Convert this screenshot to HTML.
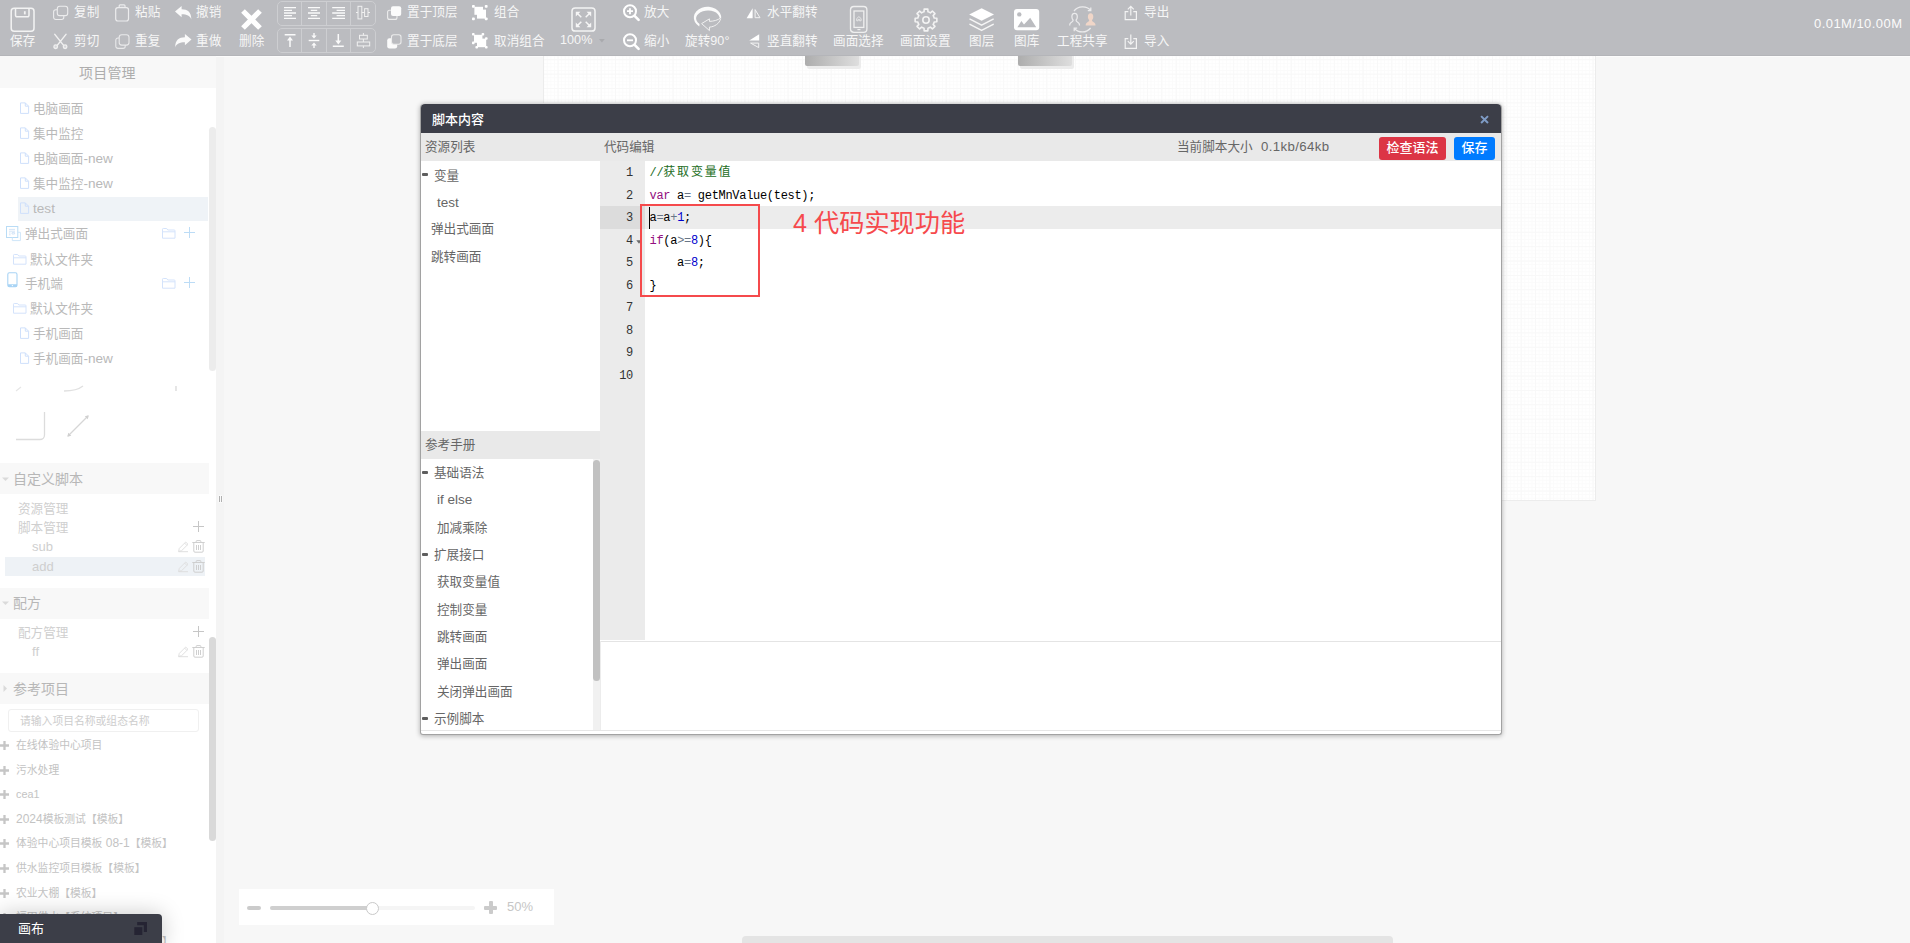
<!DOCTYPE html>
<html lang="zh-CN">
<head>
<meta charset="utf-8">
<title>脚本内容</title>
<style>
*{box-sizing:border-box;margin:0;padding:0}
html,body{width:1910px;height:943px;overflow:hidden;background:#f7f7f7;font-family:"Liberation Sans","Noto Sans CJK SC",sans-serif;font-size:13px;color:#333}
.abs{position:absolute}
#toolbar{position:absolute;left:0;top:0;width:1910px;height:56px;background:#bbbcc0;color:#f5f5f5;border-bottom:1px solid #b4b5b9}
#toolbar .t{position:absolute;font-size:12.6px;letter-spacing:0.05px;line-height:16px;white-space:nowrap;color:#f6f6f6}
#toolbar svg{position:absolute;overflow:visible}
.grp{position:absolute;left:277px;width:99px;height:25px;border:1px solid #cdced1;border-radius:5px}
.grp i{position:absolute;top:0;width:1px;height:23px;background:#cdced1}
#sidebar{position:absolute;left:0;top:56px;width:216px;height:887px;background:#fff;overflow:hidden}
#sidebar .hd{position:absolute;left:0;width:209px;background:#f8f8f8;color:#b4b4b4;font-size:14px}
#sidebar .it{position:absolute;font-size:12.6px;line-height:16px;color:#b9b9b9;white-space:nowrap}
#sidebar .sm{position:absolute;font-size:10.8px;line-height:14px;color:#c3c3c3;white-space:nowrap}
#sidebar svg{position:absolute;overflow:visible}
#canvas{position:absolute;left:543px;top:56px;width:1053px;height:445px;background-color:#fff;border-left:1px solid #ececec;border-right:1px solid #ececec;border-bottom:1px solid #ececec;
background-image:linear-gradient(#f8f8f8 1px,transparent 1px),linear-gradient(90deg,#f8f8f8 1px,transparent 1px),linear-gradient(#fbfbfb 1px,transparent 1px),linear-gradient(90deg,#fbfbfb 1px,transparent 1px);background-size:14.38px 14.38px,14.38px 14.38px,3.595px 3.595px,3.595px 3.595px;background-position:13.6px 3.3px}
#modal{position:absolute;left:420px;top:103px;width:1082px;height:632px;background:#fff;border:1px solid #a2a2a2;border-top-color:#d9d9d9;border-radius:5px 5px 3px 3px;box-shadow:0 1px 5px rgba(0,0,0,.3);overflow:hidden}
#modal .mh{position:absolute;left:0;top:0;width:1080px;height:28.5px;background:#3c3e48}
#modal .sh{position:absolute;left:0;top:28.5px;width:1080px;height:28.5px;background:#e9e9e9}
#modal .lt{position:absolute;font-size:12.6px;line-height:16px;color:#666;white-space:nowrap}
.code{position:absolute;font-family:"Liberation Mono","Noto Sans CJK SC",monospace;font-size:12px;letter-spacing:-0.3px;line-height:16px;white-space:pre;color:#000}
.code .k{color:#930f80}.code .o{color:#687687}.code .n{color:#0000cd}
.ln{position:absolute;font-family:"Liberation Mono",monospace;font-size:12px;letter-spacing:-0.3px;line-height:16px;color:#333;text-align:right;width:30px}
</style>
</head>
<body>
<!-- TOOLBAR -->
<div id="toolbar">
<!-- save -->
<svg style="left:10px;top:7px" width="25" height="25" viewBox="0 0 25 25" fill="none" stroke="#f3f3f3" stroke-width="1.5"><rect x="1.2" y="1.2" width="22.8" height="23" rx="3"/><path d="M5.5 1.5v6.8a1.5 1.5 0 0 0 1.5 1.5h10.500a1.500 1.500 0 0 0 1.500-1.500V1.500"/><path d="M14.8 4.200v3.200" stroke-width="1.800"/></svg>
<div class="t" style="left:10px;top:32.5px">保存</div>
<!-- copy -->
<svg style="left:53px;top:5px" width="16" height="16" viewBox="0 0 16 16" fill="none" stroke="#ececed" stroke-width="1.100"><rect x="4.300" y="1.300" width="10.400" height="9.300" rx="2.400"/><path d="M4.300 4.700H2.800a2.200 2.200 0 0 0-2.200 2.200v5.400A2.200 2.200 0 0 0 2.800 14.500h5.800a2.200 2.200 0 0 0 2.200-2.200V10.600"/></svg>
<div class="t" style="left:74px;top:4px">复制</div>
<!-- cut -->
<svg style="left:52px;top:33px" width="17" height="17" viewBox="0 0 17 17" fill="none" stroke="#f0f0f0" stroke-width="1.500" stroke-linecap="round"><path d="M2.800 1.400L11.600 12.400M14 1.400L5.200 12.400"/><circle cx="3.700" cy="13.700" r="1.800" stroke-width="1.300" fill="#d4d5d8"/><circle cx="13.100" cy="13.700" r="1.800" stroke-width="1.300" fill="#d4d5d8"/></svg>
<div class="t" style="left:74px;top:33px">剪切</div>
<!-- paste -->
<svg style="left:115px;top:4px" width="15" height="18" viewBox="0 0 15 18" fill="none" stroke="#ececed" stroke-width="1.2"><rect x="0.700" y="3.600" width="12.800" height="13.400" rx="2.200"/><path d="M4.200 3.600V1.800a1 1 0 0 1 1-1h3.800a1 1 0 0 1 1 1v1.800M5.400 3.400h3.400"/></svg>
<div class="t" style="left:135px;top:4px">粘贴</div>
<!-- repeat -->
<svg style="left:115px;top:34px" width="15" height="16" viewBox="0 0 15 16" fill="none" stroke="#e9e9ea" stroke-width="1.1"><rect x="4.200" y="0.700" width="9.800" height="10.400" rx="2.600"/><path d="M4.200 4H3a2.200 2.200 0 0 0-2.200 2.200v6A2.200 2.200 0 0 0 3 14.400h5a2.200 2.200 0 0 0 2.200-2.200V11.100"/></svg>
<div class="t" style="left:135px;top:33px">重复</div>
<!-- undo -->
<svg style="left:175px;top:6px" width="17" height="14" viewBox="0 0 17 14" fill="#fafafa"><path d="M0 5.400L6.600 0V3.300C12.500 3.300 16.400 6 16.300 13.400C15 9.800 12 8.300 6.600 8.300V11.200Z"/></svg>
<div class="t" style="left:196px;top:4px">撤销</div>
<!-- redo -->
<svg style="left:175px;top:34px" width="17" height="14" viewBox="0 0 17 14" fill="#fafafa"><path d="M16.500 5.400L9.900 0V3.300C4 3.300 0.100 6 0.200 13.400C1.500 9.800 4.500 8.300 9.900 8.300V11.200Z"/></svg>
<div class="t" style="left:196px;top:33px">重做</div>
<!-- delete -->
<svg style="left:241px;top:9px" width="21" height="21" viewBox="0 0 21 21" fill="none" stroke="#fff" stroke-width="5.200"><path d="M2 2L19 19M19 2L2 19"/></svg>
<div class="t" style="left:239px;top:32.5px">删除</div>
<!-- align groups -->
<div class="grp" style="top:1px"><i style="left:23px"></i><i style="left:48px"></i><i style="left:72px"></i></div>
<div class="grp" style="top:28px"><i style="left:23px"></i><i style="left:48px"></i><i style="left:72px"></i></div>
<svg style="left:277px;top:0" width="100" height="56" viewBox="277 0 100 56" fill="none" stroke="#fafafa" stroke-width="1.300">
<path d="M284 7.700h12M284 10.350h8M284 13h12M284 15.650h8M284 18.300h12"/>
<path d="M308 7.700h12M310.800 10.350h6.400M308 13h12M310.800 15.650h6.400M308 18.300h12"/>
<path d="M332.200 7.700h12.800M336.600 10.350h8.400M332.200 13h12.800M336.600 15.650h8.400M332.200 18.300h12.800"/>
<g stroke="#f0f0f0" stroke-width="1"><path d="M356 12.500h14"/><rect x="358" y="6.300" width="3.800" height="12.600" fill="#bbbcc0"/><rect x="364.600" y="8.700" width="3.400" height="7.800" fill="#bbbcc0"/></g>
<path d="M284.700 34.800h10.800M290 47V38" stroke-width="1.500"/><path d="M290 36.600l3 3.800h-6z" fill="#fafafa" stroke="none"/>
<path d="M308.700 40.500h10.600" stroke-width="1.400"/><path d="M314 33v3M314 48v-3" stroke-width="1.400"/><path d="M314 38.600l2.700-3.200h-5.400zM314 42.400l2.700 3.200h-5.400z" fill="#fafafa" stroke="none"/>
<path d="M332.800 46.200h11M338.300 34v8" stroke-width="1.500"/><path d="M338.300 44.400l3-3.800h-6z" fill="#fafafa" stroke="none"/>
<g stroke="#f0f0f0" stroke-width="1"><path d="M363.400 33v15"/><rect x="359.500" y="35.300" width="7.800" height="3.700" fill="#bbbcc0"/><rect x="357.300" y="42" width="12.400" height="3.900" fill="#bbbcc0"/></g>
</svg>
<!-- bring to top -->
<svg style="left:387px;top:6px" width="15" height="14" viewBox="0 0 15 14"><rect x="0.600" y="4.200" width="9.400" height="9.200" rx="2" fill="none" stroke="#ececec" stroke-width="1.100"/><rect x="4" y="0.200" width="10.200" height="9.800" rx="2" fill="#fbfbfb"/></svg>
<div class="t" style="left:407px;top:4px">置于顶层</div>
<svg style="left:387px;top:34px" width="15" height="15" viewBox="0 0 15 15"><rect x="0.200" y="4.300" width="10" height="10.200" rx="2.200" fill="#fbfbfb"/><rect x="4.500" y="0.700" width="9.500" height="9.600" rx="2.200" fill="#bbbcc0" stroke="#ececec" stroke-width="1.100"/></svg>
<div class="t" style="left:407px;top:33px">置于底层</div>
<!-- group -->
<svg style="left:472px;top:5px" width="16" height="16" viewBox="0 0 16 16" fill="#fff"><rect x="0" y="0" width="2.800" height="2.800" rx="0.800"/><rect x="12.800" y="0" width="2.800" height="2.800" rx="0.800"/><rect x="0" y="12.400" width="2.800" height="2.800" rx="0.800"/><rect x="12.800" y="12.400" width="2.800" height="2.800" rx="0.800"/><rect x="2.400" y="1.800" width="8.600" height="8"/><rect x="5" y="4.600" width="9" height="9"/></svg>
<div class="t" style="left:494px;top:4px">组合</div>
<svg style="left:472px;top:33px" width="16" height="16" viewBox="0 0 16 16" fill="#fff"><rect x="0" y="0" width="2.600" height="2.600" rx="0.800"/><rect x="9.600" y="0" width="2.600" height="2.600" rx="0.800"/><rect x="0" y="8.600" width="2.600" height="2.600" rx="0.800"/><rect x="13" y="4.200" width="2.600" height="2.600" rx="0.800"/><rect x="3.400" y="13" width="2.600" height="2.600" rx="0.800"/><rect x="13" y="13" width="2.600" height="2.600" rx="0.800"/><rect x="2" y="1.800" width="8.400" height="8"/><rect x="5" y="5.600" width="9.200" height="8.600"/></svg>
<div class="t" style="left:494px;top:33px">取消组合</div>
<!-- fit -->
<svg style="left:571px;top:7px" width="25" height="25" viewBox="0 0 25 25" fill="none" stroke="#f3f3f3" stroke-width="1.500"><rect x="1" y="0.900" width="23" height="23.200" rx="3.200"/><g stroke-width="1.500" stroke="#f6f6f6"><path d="M6.500 6.500l3.800 3.800M18.500 6.500l-3.800 3.800M6.500 18.500l3.800-3.800M18.500 18.500l-3.800-3.800"/></g><g fill="#f6f6f6" stroke="none"><path d="M4.800 4.800h4.600l-4.600 4.600zM20.200 4.800v4.600l-4.600-4.600zM4.800 20.200v-4.600l4.600 4.600zM20.200 20.200h-4.600l4.600-4.600z"/></g></svg>
<div class="t" style="left:560px;top:32px">100%</div>
<svg style="left:599px;top:39px" width="6" height="4" viewBox="0 0 6 4"><path d="M0 0h5.800L2.900 3.400z" fill="#a9aaad"/></svg>
<!-- zoom in/out -->
<svg style="left:622px;top:3.300px" width="18" height="18" viewBox="0 0 18 18" fill="none" stroke="#fff"><circle cx="8" cy="8.200" r="6" stroke-width="2"/><path d="M12.600 12.800l4 4" stroke-width="2.600" stroke-linecap="round"/><path d="M5 8.200h6M8 5.200v6" stroke-width="1.800"/></svg>
<div class="t" style="left:644px;top:4px">放大</div>
<svg style="left:622px;top:32px" width="18" height="18" viewBox="0 0 18 18" fill="none" stroke="#fff"><circle cx="8" cy="8.300" r="6" stroke-width="2"/><path d="M12.600 12.900l4 4" stroke-width="2.600" stroke-linecap="round"/><path d="M5 8.300h6" stroke-width="1.800"/></svg>
<div class="t" style="left:644px;top:33px">缩小</div>
<!-- rotate -->
<svg style="left:693px;top:6px" width="29" height="26" viewBox="0 0 29 26" fill="none"><path d="M6.250 20.500A13.700 11 0 1 1 28.150 12.660L26.650 11.700A11.800 7.800 0 1 0 6.560 17.900Z" fill="#fbfbfb"/><path d="M27.600 12.800C26.400 17.600 21.500 20.800 16.450 21.100V24.600L8.600 17.600L16.450 12.850V15.400C21 15.200 25 14 27.200 12.200" stroke="#f1f1f1" stroke-width="1" stroke-linejoin="round"/></svg>
<div class="t" style="left:685px;top:32.5px">旋转90°</div>
<!-- flips -->
<svg style="left:746px;top:8px" width="16" height="11" viewBox="0 0 16 11"><path d="M0.600 10.200L6.600 0.200V10.200Z" fill="#fff"/><path d="M9.100 1.600V9.700H14Z" fill="none" stroke="#f3f3f3" stroke-width="1"/></svg>
<div class="t" style="left:767px;top:4px">水平翻转</div>
<svg style="left:748px;top:34px" width="12" height="15" viewBox="0 0 12 15"><path d="M11.200 0.200V6.600H1.200Z" fill="#fff"/><path d="M10.700 9.100V13.600L2.600 9.100Z" fill="none" stroke="#f3f3f3" stroke-width="1"/></svg>
<div class="t" style="left:767px;top:33px">竖直翻转</div>
<!-- screen select -->
<svg style="left:850px;top:6px" width="18" height="27" viewBox="0 0 18 27" fill="none" stroke="#efefef" stroke-width="1.300"><rect x="0.500" y="0.500" width="16.400" height="25.800" rx="3.400"/><rect x="4" y="5" width="9.800" height="16.400"/><path d="M6.700 12.600l2.200-2 2.200 2v2.200h-1.500v-1.400h-1.400v1.400h-1.500z" stroke-width="0.800"/><path d="M7.400 23.600h3" stroke-width="1.200"/></svg>
<div class="t" style="left:833px;top:32.5px">画面选择</div>
<!-- settings gear -->
<svg style="left:914px;top:8px" width="24" height="24" viewBox="-12 -12 24 24" fill="none" stroke="#f3f3f3" stroke-width="1.600"><circle r="3.200"/><path d="M-1.96 -8.17L-1.82 -10.85L1.82 -10.85L1.96 -8.17A8.4 8.4 0 0 1 4.39 -7.16L6.39 -8.96L8.96 -6.39L7.16 -4.39A8.4 8.4 0 0 1 8.17 -1.96L10.85 -1.82L10.85 1.82L8.17 1.96A8.4 8.4 0 0 1 7.16 4.39L8.96 6.39L6.39 8.96L4.39 7.16A8.4 8.4 0 0 1 1.96 8.17L1.82 10.85L-1.82 10.85L-1.96 8.17A8.4 8.4 0 0 1 -4.39 7.16L-6.39 8.96L-8.96 6.39L-7.16 4.39A8.4 8.4 0 0 1 -8.17 1.96L-10.85 1.82L-10.85 -1.82L-8.17 -1.96A8.4 8.4 0 0 1 -7.16 -4.39L-8.96 -6.39L-6.39 -8.96L-4.39 -7.16A8.4 8.4 0 0 1 -1.96 -8.17Z" stroke-linejoin="round"/></svg>
<div class="t" style="left:900px;top:32.5px">画面设置</div>
<!-- layers -->
<svg style="left:969px;top:8px" width="26" height="24" viewBox="0 0 26 24" fill="none"><path d="M12.600 0.200L25 6.400L12.600 12.800L0.200 6.400Z" fill="#fff"/><path d="M1 11.200L12.600 17.200L24.200 11.200M1 16.400L12.600 22.400L24.200 16.400" stroke="#f6f6f6" stroke-width="1.500" stroke-linejoin="round" stroke-linecap="round"/></svg>
<div class="t" style="left:969px;top:32.5px">图层</div>
<!-- gallery -->
<svg style="left:1014px;top:9px" width="26" height="22" viewBox="0 0 26 22"><rect x="0" y="0" width="25.200" height="21.200" rx="3" fill="#fff"/><circle cx="5.300" cy="5.400" r="2.200" fill="#bbbcc0"/><path d="M3.400 18.200L7.400 12L10 15.600L16.200 8.800L22.200 18.200Z" fill="#bbbcc0"/></svg>
<div class="t" style="left:1014px;top:32.5px">图库</div>
<!-- share -->
<svg style="left:1068px;top:5px" width="29" height="29" viewBox="0 0 29 29" fill="none" stroke="#ebebec" stroke-width="1.250"><path d="M6 6C10 0.800 18.500 0.500 22.500 5.200M22.800 2.600V5.700H19.800M22.600 23C18.500 28.200 10.500 28.200 6.400 23.500M6.200 26.200V23.100H9.200"/><path d="M6.600 8.300c1.800 0 2.700 1.400 2.700 3.400c0 1.500-0.600 2.700-1.300 3.400c0 1.400 1 1.800 2.400 2.600c0.800 0.500 1.100 1.400 1.100 2.700M1.700 20.400c0-1.300 0.300-2.200 1.100-2.700c1.400-0.800 2.400-1.200 2.400-2.600c-0.700-0.700-1.300-1.900-1.300-3.400c0-2 0.900-3.400 2.700-3.400"/><path d="M22.600 8.300c1.800 0 2.700 1.400 2.700 3.400c0 1.500-0.600 2.700-1.300 3.400c0 1.400 1 1.800 2.400 2.600c0.800 0.500 1.100 1.400 1.100 2.700H17.700c0-1.300 0.300-2.200 1.100-2.700c1.400-0.800 2.400-1.200 2.400-2.600c-0.700-0.700-1.300-1.900-1.300-3.400c0-2 0.900-3.400 2.700-3.400z" fill="#f0d6c8" stroke="none"/></svg>
<div class="t" style="left:1057px;top:32.5px">工程共享</div>
<!-- export/import -->
<svg style="left:1124px;top:5px" width="14" height="16" viewBox="0 0 14 16" fill="none" stroke="#f3f3f3" stroke-width="1.200"><path d="M4.300 6.600H1.200v8h11.200v-8H9.300"/><path d="M6.800 10.400V1.600M3.800 4.400l3-3 3 3"/></svg>
<div class="t" style="left:1144px;top:4px">导出</div>
<svg style="left:1124px;top:34px" width="14" height="16" viewBox="0 0 14 16" fill="none" stroke="#f3f3f3" stroke-width="1.200"><path d="M4.300 4.600H1.200v9.800h11.200V4.600H9.300"/><path d="M6.800 0.400v9.600M3.800 7.200l3 3 3-3"/></svg>
<div class="t" style="left:1144px;top:33px">导入</div>
<div class="t" style="left:1814px;top:16px;color:#fbfbfb;font-size:13px;letter-spacing:0.45px">0.01M/10.00M</div>
</div>
<!-- SIDEBAR -->
<div id="sidebar">
<div class="hd" style="top:0;height:32px;width:216px"></div>
<div class="it" style="left:79px;top:8px;font-size:14px;line-height:18px;color:#adadad;letter-spacing:0.2px">项目管理</div>
<div class="abs" style="left:18px;top:141px;width:190px;height:24px;background:#eff3f7"></div>
<svg style="left:20px;top:46px" width="10" height="13" viewBox="0 0 10 13" fill="none" stroke="#cfe0fb" stroke-width="1"><path d="M0.500 0.900H5.300L8.600 4.200V11.400H0.500ZM5.300 0.900V4.200H8.600"/></svg>
<div class="it" style="left:33px;top:44.5px">电脑画面</div>
<svg style="left:20px;top:71px" width="10" height="13" viewBox="0 0 10 13" fill="none" stroke="#cfe0fb" stroke-width="1"><path d="M0.500 0.900H5.300L8.600 4.200V11.400H0.500ZM5.300 0.900V4.200H8.600"/></svg>
<div class="it" style="left:33px;top:69.5px">集中监控</div>
<svg style="left:20px;top:96px" width="10" height="13" viewBox="0 0 10 13" fill="none" stroke="#cfe0fb" stroke-width="1"><path d="M0.500 0.900H5.300L8.600 4.200V11.400H0.500ZM5.300 0.900V4.200H8.600"/></svg>
<div class="it" style="left:33px;top:94.5px">电脑画面<span style="font-size:13.600px">-new</span></div>
<svg style="left:20px;top:121px" width="10" height="13" viewBox="0 0 10 13" fill="none" stroke="#cfe0fb" stroke-width="1"><path d="M0.500 0.900H5.300L8.600 4.200V11.400H0.500ZM5.300 0.900V4.200H8.600"/></svg>
<div class="it" style="left:33px;top:119.5px">集中监控<span style="font-size:13.600px">-new</span></div>
<svg style="left:20px;top:146px" width="10" height="13" viewBox="0 0 10 13" fill="none" stroke="#cfe0fb" stroke-width="1"><path d="M0.500 0.900H5.300L8.600 4.200V11.400H0.500ZM5.300 0.900V4.200H8.600"/></svg>
<div class="it" style="left:33px;top:144.5px"><span style="font-size:13.600px">test</span></div>
<div class="abs" style="left:209px;top:71px;width:7px;height:244px;background:#ececec;border-radius:4px"></div>
<svg style="left:6px;top:170px" width="16" height="16" viewBox="0 0 16 16" fill="none" stroke="#b9dcf6" stroke-width="1"><rect x="0.500" y="0.500" width="11.300" height="11"/><path d="M11.800 6.300H14.400V14.600H6.300V11.500" stroke="#cfe6f9"/><path d="M3 3.400H9M3 5.200H9M3 7H4.600M6 6.600h2.600v1.400H6zM3 8.800H4.600" stroke="#cfe2f6" stroke-width="0.900"/></svg>
<div class="it" style="left:25px;top:169.5px">弹出式画面</div>
<svg style="left:162px;top:172px" width="14" height="11" viewBox="0 0 14 11" fill="none" stroke="#d4e3fb" stroke-width="1"><path d="M0.500 10V1.300a0.800 0.800 0 0 1 0.800-0.800H4.600L5.800 2H12.200a0.800 0.800 0 0 1 0.800 0.800V10.200H0.500ZM0.500 3.800H13"/></svg>
<svg style="left:184px;top:171px" width="11" height="11" viewBox="0 0 11 11" fill="none" stroke="#bcdcf6" stroke-width="1"><path d="M0 5.500H11M5.500 0V11"/></svg>
<svg style="left:13px;top:198px" width="14" height="11" viewBox="0 0 14 11" fill="none" stroke="#d4e3fb" stroke-width="1"><path d="M0.500 10V1.300a0.800 0.800 0 0 1 0.800-0.800H4.600L5.800 2H12.200a0.800 0.800 0 0 1 0.800 0.800V10.200H0.500ZM0.500 3.800H13"/></svg>
<div class="it" style="left:30px;top:196px">默认文件夹</div>
<svg style="left:7px;top:216px" width="11" height="16" viewBox="0 0 11 16" fill="none" stroke="#a9d4f5" stroke-width="1.100"><rect x="0.800" y="0.800" width="9.200" height="14" rx="1.600"/><path d="M1 12.300H10V14a1 1 0 0 1-1 1H2a1 1 0 0 1-1-1Z" fill="#a9d4f5" stroke="none"/><circle cx="5.400" cy="13.600" r="0.700" fill="#fff" stroke="none"/></svg>
<div class="it" style="left:25px;top:219.5px">手机端</div>
<svg style="left:162px;top:222px" width="14" height="11" viewBox="0 0 14 11" fill="none" stroke="#d4e3fb" stroke-width="1"><path d="M0.500 10V1.300a0.800 0.800 0 0 1 0.800-0.800H4.600L5.800 2H12.200a0.800 0.800 0 0 1 0.800 0.800V10.200H0.500ZM0.500 3.800H13"/></svg>
<svg style="left:184px;top:221px" width="11" height="11" viewBox="0 0 11 11" fill="none" stroke="#bcdcf6" stroke-width="1"><path d="M0 5.500H11M5.500 0V11"/></svg>
<svg style="left:13px;top:247px" width="14" height="11" viewBox="0 0 14 11" fill="none" stroke="#d4e3fb" stroke-width="1"><path d="M0.500 10V1.300a0.800 0.800 0 0 1 0.800-0.800H4.600L5.800 2H12.200a0.800 0.800 0 0 1 0.800 0.800V10.200H0.500ZM0.500 3.800H13"/></svg>
<div class="it" style="left:30px;top:245px">默认文件夹</div>
<svg style="left:20px;top:271px" width="10" height="13" viewBox="0 0 10 13" fill="none" stroke="#cfe0fb" stroke-width="1"><path d="M0.500 0.900H5.300L8.600 4.200V11.400H0.500ZM5.300 0.900V4.200H8.600"/></svg>
<div class="it" style="left:33px;top:270px">手机画面</div>
<svg style="left:20px;top:296px" width="10" height="13" viewBox="0 0 10 13" fill="none" stroke="#cfe0fb" stroke-width="1"><path d="M0.500 0.900H5.300L8.600 4.200V11.400H0.500ZM5.300 0.900V4.200H8.600"/></svg>
<div class="it" style="left:33px;top:294.5px">手机画面<span style="font-size:13.600px">-new</span></div>
<svg style="left:0;top:326px" width="208" height="64" viewBox="0 382 208 64" fill="none" stroke="#dddddd" stroke-width="1.300"><path d="M16 391l5-4" stroke="#e6e6e6"/><path d="M64 391c8 0 14-1 19-5" stroke="#e0e0e0"/><path d="M176 386v5" stroke="#d8d8d8"/><path d="M16 439.500H40a4.500 4.500 0 0 0 4.500-4.500V412" stroke="#dcdcdc"/><path d="M68 436L88 416" stroke="#d6d6d6"/><path d="M67.300 436.800l1-4 3 3zM88.800 415.200l-1 4-3-3z" fill="#d0d0d0" stroke="none"/></svg>
<div class="hd" style="top:407px;height:31px"></div>
<svg style="left:2px;top:420.5px" width="8" height="5" viewBox="0 0 8 5"><path d="M0 0.500H7L3.500 4z" fill="#dadada"/></svg>
<div class="it" style="left:13px;top:413.5px;font-size:14px;line-height:18px;color:#b7b7b7">自定义脚本</div>
<div class="it" style="left:18px;top:444.5px;color:#cfcfcf">资源管理</div>
<div class="it" style="left:18px;top:463.5px;color:#cfcfcf">脚本管理</div>
<svg style="left:193px;top:465px" width="11" height="11" viewBox="0 0 11 11" fill="none" stroke="#c6c6c6" stroke-width="1"><path d="M0 5.500H11M5.500 0V11"/></svg>
<div class="it" style="left:32px;top:483px;color:#cfcfcf;font-size:13px">sub</div>
<svg style="left:178px;top:484.5px" width="11" height="11" viewBox="0 0 11 11" fill="none" stroke="#dcdcdc" stroke-width="0.900"><path d="M0.600 10.400L1.300 7.400L7.700 1L10 3.300L3.600 9.700ZM6.600 2.100L8.900 4.400M0.400 10.700H10"/></svg>
<svg style="left:192px;top:483.5px" width="13" height="13" viewBox="0 0 13 13" fill="none" stroke="#cfcfcf" stroke-width="1"><path d="M0.300 2.500H12.700M4.200 2.300V1.300a0.700 0.700 0 0 1 0.700-0.700H8.100a0.700 0.700 0 0 1 0.700 0.700V2.300M1.800 2.800V11a1.200 1.200 0 0 0 1.200 1.200H10a1.200 1.200 0 0 0 1.200-1.200V2.800M4.500 5V10M6.500 5V10M8.500 5V10"/></svg>
<div class="abs" style="left:5px;top:501px;width:200px;height:19px;background:#eef2f6"></div>
<div class="it" style="left:32px;top:502.5px;color:#cfcfcf;font-size:13px">add</div>
<svg style="left:178px;top:504.5px" width="11" height="11" viewBox="0 0 11 11" fill="none" stroke="#dcdcdc" stroke-width="0.900"><path d="M0.600 10.400L1.300 7.400L7.700 1L10 3.300L3.600 9.700ZM6.600 2.100L8.900 4.400M0.400 10.700H10"/></svg>
<svg style="left:192px;top:503.5px" width="13" height="13" viewBox="0 0 13 13" fill="none" stroke="#cfcfcf" stroke-width="1"><path d="M0.300 2.500H12.700M4.200 2.300V1.300a0.700 0.700 0 0 1 0.700-0.700H8.100a0.700 0.700 0 0 1 0.700 0.700V2.300M1.800 2.800V11a1.200 1.200 0 0 0 1.200 1.200H10a1.200 1.200 0 0 0 1.200-1.200V2.800M4.500 5V10M6.500 5V10M8.500 5V10"/></svg>
<div class="hd" style="top:532px;height:31px"></div>
<svg style="left:2px;top:545px" width="8" height="5" viewBox="0 0 8 5"><path d="M0 0.500H7L3.500 4z" fill="#dadada"/></svg>
<div class="it" style="left:13px;top:538px;font-size:14px;line-height:18px;color:#b7b7b7">配方</div>
<div class="it" style="left:18px;top:568.5px;color:#cfcfcf">配方管理</div>
<svg style="left:193px;top:570px" width="11" height="11" viewBox="0 0 11 11" fill="none" stroke="#c6c6c6" stroke-width="1"><path d="M0 5.500H11M5.500 0V11"/></svg>
<div class="it" style="left:32px;top:588px;color:#cfcfcf;font-size:13px">ff</div>
<svg style="left:178px;top:589.5px" width="11" height="11" viewBox="0 0 11 11" fill="none" stroke="#dcdcdc" stroke-width="0.900"><path d="M0.600 10.400L1.300 7.400L7.700 1L10 3.300L3.600 9.700ZM6.600 2.100L8.900 4.400M0.400 10.700H10"/></svg>
<svg style="left:192px;top:588.5px" width="13" height="13" viewBox="0 0 13 13" fill="none" stroke="#cfcfcf" stroke-width="1"><path d="M0.300 2.500H12.700M4.200 2.300V1.300a0.700 0.700 0 0 1 0.700-0.700H8.100a0.700 0.700 0 0 1 0.700 0.700V2.300M1.800 2.800V11a1.200 1.200 0 0 0 1.200 1.200H10a1.200 1.200 0 0 0 1.200-1.200V2.800M4.500 5V10M6.500 5V10M8.500 5V10"/></svg>
<div class="hd" style="top:617px;height:31px"></div>
<svg style="left:3px;top:629px" width="5" height="8" viewBox="0 0 5 8"><path d="M0.500 0V7L4 3.500z" fill="#dadada"/></svg>
<div class="it" style="left:13px;top:624px;font-size:14px;line-height:18px;color:#b7b7b7">参考项目</div>
<div class="abs" style="left:8px;top:653px;width:191px;height:23px;border:1px solid #f0f0f0;border-radius:3px;background:#fff"></div>
<div class="sm" style="left:20px;top:657.5px;color:#cdcdcd">请输入项目名称或组态名称</div>
<svg style="left:-0.500px;top:684.5px" width="10" height="9" viewBox="0 0 10 9" fill="none" stroke="#c6c6c6" stroke-width="2.300"><path d="M0 4.500H9M4.500 0V9"/></svg>
<div class="sm" style="left:16px;top:682px">在线体验中心项目</div>
<svg style="left:-0.500px;top:709.5px" width="10" height="9" viewBox="0 0 10 9" fill="none" stroke="#c6c6c6" stroke-width="2.300"><path d="M0 4.500H9M4.500 0V9"/></svg>
<div class="sm" style="left:16px;top:707px">污水处理</div>
<svg style="left:-0.500px;top:733.5px" width="10" height="9" viewBox="0 0 10 9" fill="none" stroke="#c6c6c6" stroke-width="2.300"><path d="M0 4.500H9M4.500 0V9"/></svg>
<div class="sm" style="left:16px;top:731px">cea1</div>
<svg style="left:-0.500px;top:758.5px" width="10" height="9" viewBox="0 0 10 9" fill="none" stroke="#c6c6c6" stroke-width="2.300"><path d="M0 4.500H9M4.500 0V9"/></svg>
<div class="sm" style="left:16px;top:756px"><span style="font-size:12px">2024</span>模板测试【模板】</div>
<svg style="left:-0.500px;top:782.5px" width="10" height="9" viewBox="0 0 10 9" fill="none" stroke="#c6c6c6" stroke-width="2.300"><path d="M0 4.500H9M4.500 0V9"/></svg>
<div class="sm" style="left:16px;top:780px">体验中心项目模板<span style="font-size:12px"> 08-1</span>【模板】</div>
<svg style="left:-0.500px;top:807.5px" width="10" height="9" viewBox="0 0 10 9" fill="none" stroke="#c6c6c6" stroke-width="2.300"><path d="M0 4.500H9M4.500 0V9"/></svg>
<div class="sm" style="left:16px;top:805px">供水监控项目模板【模板】</div>
<svg style="left:-0.500px;top:832.5px" width="10" height="9" viewBox="0 0 10 9" fill="none" stroke="#c6c6c6" stroke-width="2.300"><path d="M0 4.500H9M4.500 0V9"/></svg>
<div class="sm" style="left:16px;top:830px">农业大棚【模板】</div>
<svg style="left:-0.500px;top:856.5px" width="10" height="9" viewBox="0 0 10 9" fill="none" stroke="#c6c6c6" stroke-width="2.300"><path d="M0 4.500H9M4.500 0V9"/></svg>
<div class="sm" style="left:16px;top:854px">福田供水【系统项目】</div>
<svg style="left:-0.500px;top:880.5px" width="10" height="9" viewBox="0 0 10 9" fill="none" stroke="#c6c6c6" stroke-width="2.300"><path d="M0 4.500H9M4.500 0V9"/></svg>
<div class="sm" style="left:16px;top:878px">体验中心项目模板<span style="font-size:12px"> 08-1</span>【模板】</div>
<div class="abs" style="left:209px;top:581px;width:7px;height:204px;background:#d9d9d9;border-radius:4px"></div>
</div>
<!-- SPLITTER -->
<div class="abs" style="left:216px;top:56px;width:8px;height:887px;background:#f4f4f4"></div>
<div class="abs" style="left:218px;top:495px;width:5px;height:8px;background:#fafafa;border-radius:2px"></div><div class="abs" style="left:219px;top:496px;width:1px;height:6px;background:#b0b0b0"></div><div class="abs" style="left:221px;top:496px;width:1px;height:6px;background:#b0b0b0"></div>
<div class="abs" style="left:216px;top:56px;width:1694px;height:1px;background:#fcfcfc"></div>
<!-- CANVAS -->
<div id="canvas">
<div class="abs" style="left:263px;top:0;width:54px;height:13px;background:#ececec;border-radius:0 0 2px 2px"></div>
<div class="abs" style="left:261px;top:0;width:54px;height:10px;background:linear-gradient(90deg,#adadad,#dedede);border-radius:0 0 2px 2px"></div>
<div class="abs" style="left:476px;top:0;width:54px;height:13px;background:#ececec;border-radius:0 0 2px 2px"></div>
<div class="abs" style="left:474px;top:0;width:54px;height:10px;background:linear-gradient(90deg,#adadad,#dedede);border-radius:0 0 2px 2px"></div>
</div>
<!-- ZOOMBAR -->
<div id="zoombar" class="abs" style="left:239px;top:889px;width:315px;height:36px;background:#fff">
<div class="abs" style="left:8px;top:17px;width:14px;height:4px;background:#cbcbcb;border-radius:2px"></div>
<div class="abs" style="left:31px;top:17px;width:205px;height:4px;background:#f5f5f5;border-radius:2px"></div>
<div class="abs" style="left:31px;top:17px;width:102px;height:4px;background:#cfcfcf;border-radius:2px"></div>
<div class="abs" style="left:127px;top:13px;width:13px;height:13px;background:#fff;border:1px solid #c9c9c9;border-radius:50%"></div>
<div class="abs" style="left:245px;top:17px;width:13px;height:4px;background:#cbcbcb;border-radius:1px"></div>
<div class="abs" style="left:250px;top:12px;width:4px;height:13px;background:#cbcbcb;border-radius:1px"></div>
<div class="abs" style="left:268px;top:10px;font-size:13px;line-height:16px;color:#c6c6c6">50%</div>
</div>
<!-- HSCROLL -->
<div class="abs" style="left:742px;top:936px;width:651px;height:7px;background:#e4e4e4;border-radius:4px 4px 0 0"></div>
<!-- HUABU -->
<div class="abs" style="left:0;top:914px;width:162px;height:32px;background:#3c3e48;border-radius:0 4px 0 0;box-shadow:0 0 22px rgba(0,0,0,.22)">
<div class="abs" style="left:18px;top:6.500px;font-size:13px;line-height:16px;color:#fff">画布</div>
<svg class="abs" style="left:134px;top:8px" width="14" height="14" viewBox="0 0 14 14" fill="#252433"><path d="M3.200 0H13V10H9.800V3.200H3.200Z"/><rect x="0.300" y="5.200" width="8" height="7.800"/></svg>
</div>
<!-- MODAL -->
<div id="modal">
<div class="mh"></div>
<div class="lt" style="left:11px;top:8px;color:#fff;font-weight:500;font-size:13px">脚本内容</div>
<svg class="abs" style="left:1058.500px;top:10.500px" width="10" height="10" viewBox="0 0 10 10" fill="none" stroke="#7f9cc6" stroke-width="2"><path d="M1.100 1.100L8 8M8 1.100L1.100 8"/></svg>
<div class="sh"></div>
<div class="lt" style="left:4px;top:34.5px">资源列表</div>
<div class="lt" style="left:183px;top:34.5px">代码编辑</div>
<div class="lt" style="left:756px;top:34.5px">当前脚本大小</div>
<div class="lt" style="left:840px;top:34.5px;letter-spacing:0.400px;font-size:13.200px">0.1kb/64kb</div>
<div class="abs" style="left:958px;top:33px;width:67px;height:23px;background:#dc3545;border-radius:3px;color:#fff;font-weight:500;font-size:13px;line-height:22px;text-align:center">检查语法</div>
<div class="abs" style="left:1033px;top:33px;width:41px;height:23px;background:#007bff;border-radius:3px;color:#fff;font-weight:500;font-size:13px;line-height:22px;text-align:center">保存</div>
<div class="abs" style="left:1px;top:69.45px;width:6px;height:2.5px;background:#5e5e5e;border-radius:1px"></div>
<div class="lt" style="left:13px;top:63.5px">变量</div>
<div class="lt" style="left:16px;top:91px;font-size:13.500px">test</div>
<div class="lt" style="left:10px;top:117px">弹出式画面</div>
<div class="lt" style="left:10px;top:145px">跳转画面</div>
<div class="abs" style="left:0px;top:327px;width:179px;height:27.5px;background:#e9e9e9"></div>
<div class="lt" style="left:4px;top:332.5px">参考手册</div>
<div class="abs" style="left:1px;top:367.35px;width:6px;height:2.5px;background:#5e5e5e;border-radius:1px"></div>
<div class="lt" style="left:13px;top:361.1px">基础语法</div>
<div class="lt" style="left:16px;top:388.4px;font-size:13.500px">if else</div>
<div class="lt" style="left:16px;top:415.7px">加减乘除</div>
<div class="abs" style="left:1px;top:449.25px;width:6px;height:2.5px;background:#5e5e5e;border-radius:1px"></div>
<div class="lt" style="left:13px;top:443px">扩展接口</div>
<div class="lt" style="left:16px;top:470.3px">获取变量值</div>
<div class="lt" style="left:16px;top:497.6px">控制变量</div>
<div class="lt" style="left:16px;top:524.9px">跳转画面</div>
<div class="lt" style="left:16px;top:552.2px">弹出画面</div>
<div class="lt" style="left:16px;top:579.5px">关闭弹出画面</div>
<div class="abs" style="left:1px;top:613.05px;width:6px;height:2.5px;background:#5e5e5e;border-radius:1px"></div>
<div class="lt" style="left:13px;top:606.8px">示例脚本</div>
<div class="abs" style="left:172px;top:354.5px;width:7px;height:272px;background:#f1f1f1"></div>
<div class="abs" style="left:172px;top:355.5px;width:7px;height:221.5px;background:#c1c1c1;border-radius:3.500px"></div>
<div class="abs" style="left:179px;top:57px;width:45px;height:479px;background:#ebebeb"></div>
<div class="abs" style="left:179px;top:102px;width:45px;height:22.5px;background:#dcdcdc"></div>
<div class="abs" style="left:224px;top:102px;width:856px;height:22.5px;background:#ececec"></div>
<div class="abs" style="left:179px;top:537px;width:901px;height:1px;background:#e4e4e4"></div>
<div class="abs" style="left:179px;top:537px;width:1px;height:89px;background:#ececec"></div>
<div class="abs" style="left:0px;top:625.5px;width:1080px;height:1px;background:#e6e6e6"></div>
<div class="ln" style="left:182px;top:61.3px">1</div>
<div class="ln" style="left:182px;top:83.81px">2</div>
<div class="ln" style="left:182px;top:106.32px">3</div>
<div class="ln" style="left:182px;top:128.83px">4</div>
<div class="ln" style="left:182px;top:151.34px">5</div>
<div class="ln" style="left:182px;top:173.85px">6</div>
<div class="ln" style="left:182px;top:196.36px">7</div>
<div class="ln" style="left:182px;top:218.87px">8</div>
<div class="ln" style="left:182px;top:241.38px">9</div>
<div class="ln" style="left:182px;top:263.89px">10</div>
<svg class="abs" style="left:214.5px;top:135.8px" width="6" height="4" viewBox="0 0 6 4"><path d="M0.300 0.300H5.700L3 3.700Z" fill="#6a6a6a"/></svg>
<div class="code" style="left:228.5px;top:61.2px"><span style="color:#236e24">//<span style="font-size:12px;letter-spacing:1.800px">获取变量值</span></span></div>
<div class="code" style="left:228.5px;top:83.71px"><span class="k">var</span> a<span class="o">=</span> getMnValue(test);</div>
<div class="code" style="left:228.5px;top:106.22px">a<span class="o">=</span>a<span class="o">+</span><span class="n">1</span>;</div>
<div class="code" style="left:228.5px;top:128.73px"><span class="k">if</span>(a<span class="o">&gt;=</span><span class="n">8</span>){</div>
<div class="code" style="left:228.5px;top:151.24px">    a<span class="o">=</span><span class="n">8</span>;</div>
<div class="code" style="left:228.5px;top:173.75px">}</div>
<div class="abs" style="left:228px;top:102.5px;width:1.3px;height:22px;background:#000"></div>
<div class="abs" style="left:219px;top:100px;width:120px;height:93px;border:2px solid #f54a4c"></div>
<div class="abs" style="left:372px;top:101px;font-size:25.200px;line-height:36px;color:#f6494c;white-space:nowrap">4 代码实现功能</div>
</div>
</body>
</html>
